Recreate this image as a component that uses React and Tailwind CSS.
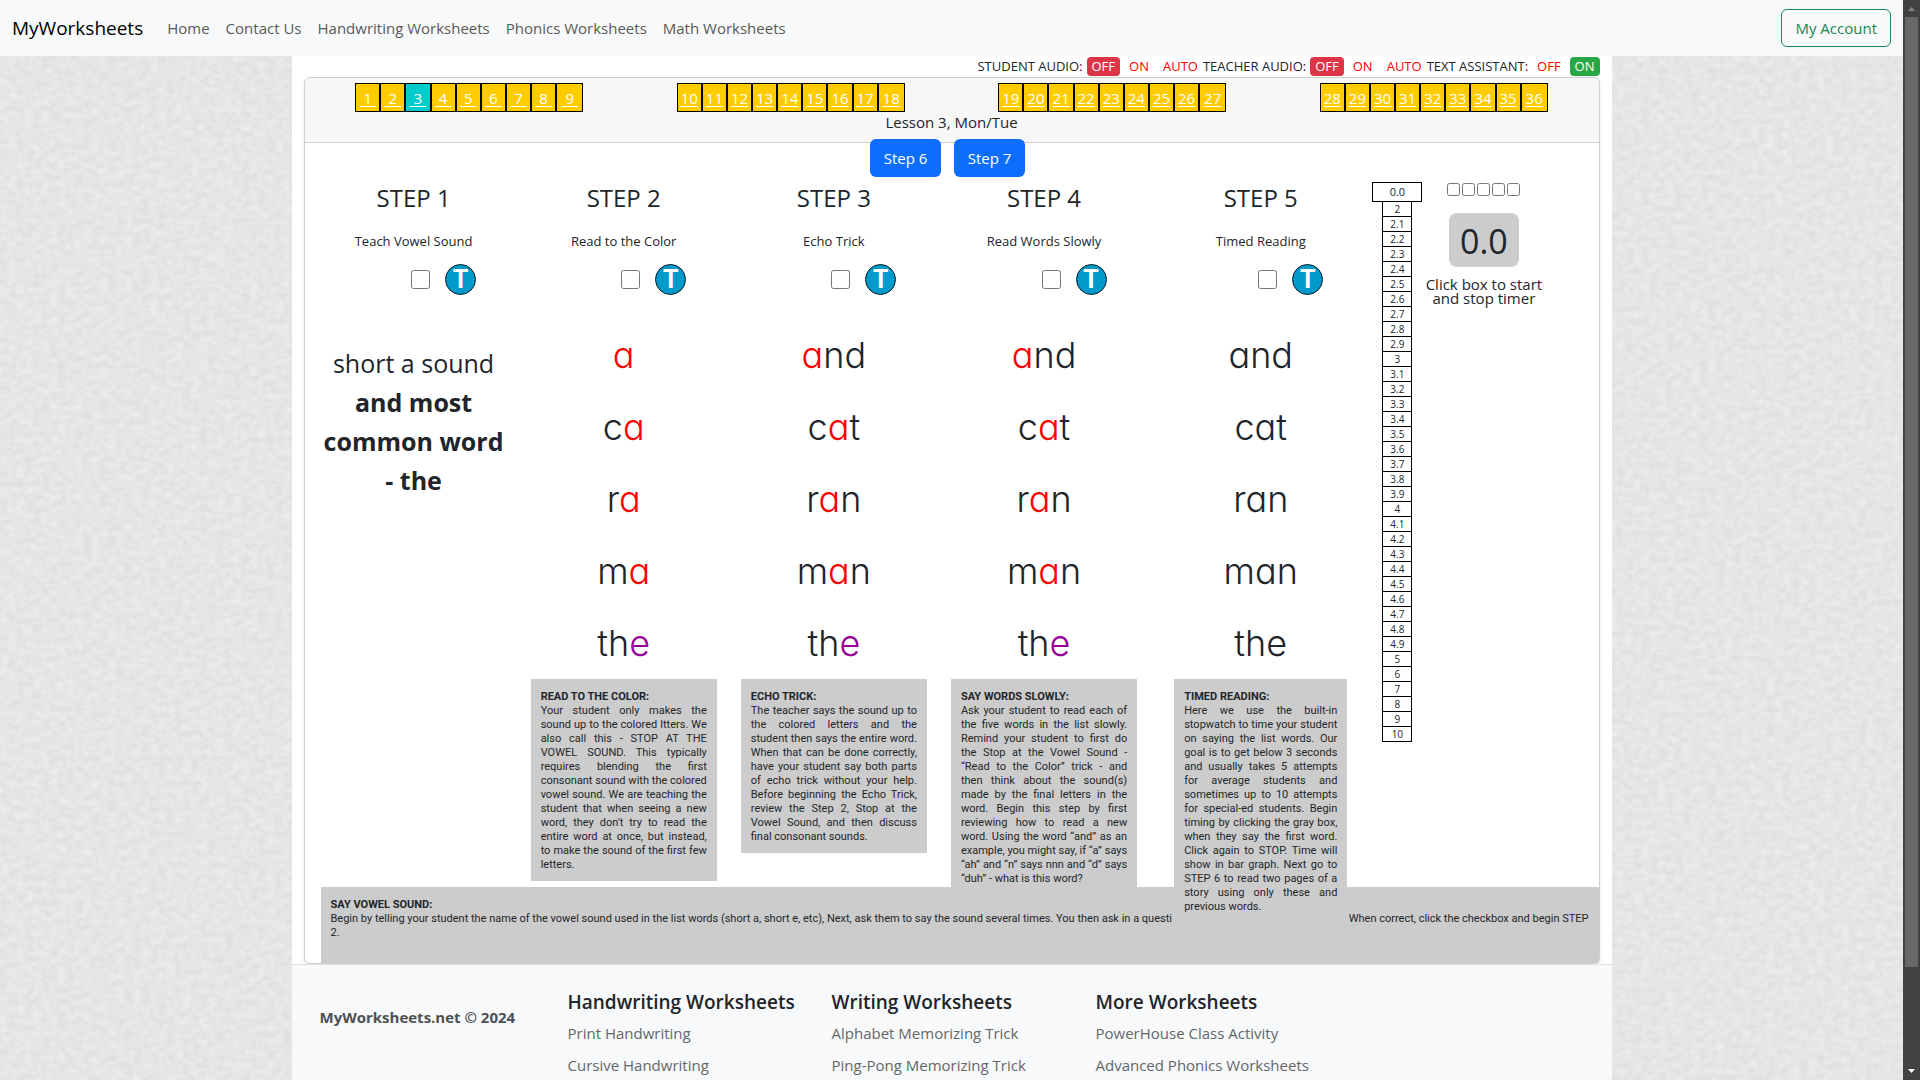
import React, { useState } from "react";
import { clsx } from "clsx";

const navLinks = [
    "Home",
    "Contact Us",
    "Handwriting Worksheets",
    "Phonics Worksheets",
    "Math Worksheets",
];

const lessonGroups = [0, 9, 18, 27].map((start) =>
    Array.from({ length: 9 }, (_, i) => start + i + 1)
);

const times = [
    ...Array.from({ length: 30 }, (_, i) => String((20 + i) / 10)),
    "5",
    "6",
    "7",
    "8",
    "9",
    "10",
];

// Each word is split into [before, coloured part, after]
const fullWords = [
    ["", "a", "nd"],
    ["c", "a", "t"],
    ["r", "a", "n"],
    ["m", "a", "n"],
    ["th", "e", ""],
];
const startWords = fullWords.map(([before, letter]) => [before, letter, ""]);

const steps = [
    {
        title: "STEP 2",
        subtitle: "Read to the Color",
        words: startWords,
        colored: true,
        noteTitle: "READ TO THE COLOR:",
        note: [
            "Your student only makes the",
            "sound up to the colored ltters. We",
            "also call this - STOP AT THE",
            "VOWEL SOUND. This typically",
            "requires blending the first",
            "consonant sound with the colored",
            "vowel sound. We are teaching the",
            "student that when seeing a new",
            "word, they don't try to read the",
            "entire word at once, but instead,",
            "to make the sound of the first few",
            "letters.",
        ],
    },
    {
        title: "STEP 3",
        subtitle: "Echo Trick",
        words: fullWords,
        colored: true,
        noteTitle: "ECHO TRICK:",
        note: [
            "The teacher says the sound up to",
            "the colored letters and the",
            "student then says the entire word.",
            "When that can be done correctly,",
            "have your student say both parts",
            "of echo trick without your help.",
            "Before beginning the Echo Trick,",
            "review the Step 2, Stop at the",
            "Vowel Sound, and then discuss",
            "final consonant sounds.",
        ],
    },
    {
        title: "STEP 4",
        subtitle: "Read Words Slowly",
        words: fullWords,
        colored: true,
        noteTitle: "SAY WORDS SLOWLY:",
        note: [
            "Ask your student to read each of",
            "the five words in the list slowly.",
            "Remind your student to first do",
            "the Stop at the Vowel Sound -",
            "“Read to the Color” trick - and",
            "then think about the sound(s)",
            "made by the final letters in the",
            "word. Begin this step by first",
            "reviewing how to read a new",
            "word. Using the word “and” as an",
            "example, you might say, if “a” says",
            "“ah” and “n” says nnn and “d” says",
            "“duh” - what is this word?",
        ],
    },
    {
        title: "STEP 5",
        subtitle: "Timed Reading",
        words: fullWords,
        colored: false,
        wide: true,
        noteTitle: "TIMED READING:",
        note: [
            "Here we use the built-in",
            "stopwatch to time your student",
            "on saying the list words. Our",
            "goal is to get below 3 seconds",
            "and usually takes 5 attempts",
            "for average students and",
            "sometimes up to 10 attempts",
            "for special-ed students. Begin",
            "timing by clicking the gray box,",
            "when they say the first word.",
            "Click again to STOP. Time will",
            "show in bar graph. Next go to",
            "STEP 6 to read two pages of a",
            "story using only these and",
            "previous words.",
        ],
    },
];

const footerColumns = [
    {
        title: "Handwriting Worksheets",
        links: ["Print Handwriting", "Cursive Handwriting"],
    },
    {
        title: "Writing Worksheets",
        links: ["Alphabet Memorizing Trick", "Ping-Pong Memorizing Trick"],
    },
    {
        title: "More Worksheets",
        links: ["PowerHouse Class Activity", "Advanced Phonics Worksheets"],
    },
];

function Navbar() {
    return (
        <nav className="relative flex h-14 items-center bg-[#f8f9fa] px-3">
            <a href="#" className="mr-6 text-[19px] text-black">
                MyWorksheets
            </a>
            <div className="flex gap-4 text-[15px] text-[#595959]">
                {navLinks.map((label) => (
                    <a key={label} href="#">
                        {label}
                    </a>
                ))}
            </div>
            <button className="ml-auto h-[38px] rounded-md border border-[#198754] px-[13px] text-[15px] text-[#198754]">
                My Account
            </button>
        </nav>
    );
}

function AudioOption({ label, active }) {
    return (
        <button
            className={clsx(
                "h-[19px] rounded px-[5px] leading-[19px]",
                active === "red" && "bg-[#dc3545] text-white",
                active === "green" && "bg-[#28a745] text-white",
                !active && "text-[#ff0000]"
            )}
        >
            {label}
        </button>
    );
}

function AudioBar() {
    return (
        <div className="flex h-[21px] items-center justify-end text-[13px]">
            <span className="mr-1">STUDENT AUDIO:</span>
            <div className="flex gap-1">
                <AudioOption label="OFF" active="red" />
                <AudioOption label="ON" />
                <AudioOption label="AUTO" />
            </div>
            <span className="mr-1">TEACHER AUDIO:</span>
            <div className="flex gap-1">
                <AudioOption label="OFF" active="red" />
                <AudioOption label="ON" />
                <AudioOption label="AUTO" />
            </div>
            <span className="mr-1">TEXT ASSISTANT:</span>
            <div className="flex gap-1">
                <AudioOption label="OFF" />
                <AudioOption label="ON" active="green" />
            </div>
        </div>
    );
}

function LessonPicker() {
    return (
        <div className="grid grid-cols-4 px-1 pt-[5px]">
            {lessonGroups.map((group) => (
                <div key={group[0]} className="flex justify-center">
                    <div className="grid w-[228px] grid-cols-9 border border-black">
                        {group.map((n) => (
                            <a
                                key={n}
                                href="#"
                                className={clsx(
                                    "h-[27px] border-black text-center text-[15px] leading-7 text-white underline underline-offset-2 not-last:border-r-2",
                                    n === 3 ? "bg-[#00cccc]" : "bg-[#ffcc00]"
                                )}
                            >
                                {n < 10 ? `\u00a0${n}\u00a0` : n}
                            </a>
                        ))}
                    </div>
                </div>
            ))}
        </div>
    );
}

function StepHeader({ title, subtitle }) {
    return (
        <div className="flex flex-col items-center pt-[3px]">
            <h2 className="text-[24px] leading-9">{title}</h2>
            <p className="mt-[15px] text-[13px] leading-[21px]">{subtitle}</p>
            <div className="mt-3 flex h-[31px] w-[125px] items-center justify-end gap-[15px]">
                <input
                    type="checkbox"
                    aria-label={`${title} done`}
                    className="size-[19px]"
                />
                <button
                    aria-label={`${title} teacher audio`}
                    className="flex size-[31px] items-center justify-center rounded-full border border-[#0b1a24] bg-[#0099cc] font-['Roboto',sans-serif] text-[25px] leading-none font-bold text-white"
                >
                    T
                </button>
            </div>
        </div>
    );
}

function Word({ parts, colored }) {
    const [before, letter, after] = parts;
    return (
        <li className="h-18 text-center font-['Inter',sans-serif] text-[36px] leading-18 font-light [font-feature-settings:'cv11']">
            {before}
            <span
                className={clsx(
                    colored && letter === "a" && "text-[#ff0000]",
                    colored && letter === "e" && "text-[#990099]"
                )}
            >
                {letter}
            </span>
            {after}
        </li>
    );
}

function Note({ title, lines }) {
    return (
        <div className="bg-[#cccccc] px-2.5 pt-[11px] pb-[9px] font-['Roboto',sans-serif] text-[11px] leading-[14px]">
            <h3 className="font-bold">{title}</h3>
            <p>
                {lines.map((line) => (
                    <span
                        key={line}
                        className="block whitespace-nowrap not-last:[text-align-last:justify]"
                    >
                        {line}{" "}
                    </span>
                ))}
            </p>
        </div>
    );
}

function StepColumn({ step }) {
    return (
        <section>
            <StepHeader title={step.title} subtitle={step.subtitle} />
            <ul className="mt-6">
                {step.words.map((parts) => (
                    <Word
                        key={parts.join("")}
                        parts={parts}
                        colored={step.colored}
                    />
                ))}
            </ul>
            {/* Long notes run over the bar below */}
            <div
                className={clsx(
                    "relative z-10 h-[208px]",
                    step.wide ? "px-[25px]" : "px-3"
                )}
            >
                <Note title={step.noteTitle} lines={step.note} />
            </div>
        </section>
    );
}

function TimeTable() {
    return (
        <div className="flex flex-col items-center pt-[5px]">
            <div className="h-5 w-full border border-black text-center text-[11px] leading-[18px]">
                0.0
            </div>
            <ol className="w-[30px] border-x border-black text-center text-[10px]">
                {times.map((t) => (
                    <li
                        key={t}
                        className="h-[15px] border-b border-black leading-[15px]"
                    >
                        {t}
                    </li>
                ))}
            </ol>
        </div>
    );
}

function Stopwatch() {
    const [running, setRunning] = useState(false);
    return (
        <div className="flex flex-col items-center pt-1.5">
            <div className="flex gap-0.5">
                {[1, 2, 3, 4, 5].map((n) => (
                    <input
                        key={n}
                        type="checkbox"
                        aria-label={`Attempt ${n}`}
                        className="size-[13px]"
                    />
                ))}
            </div>
            <button
                aria-pressed={running}
                onClick={() => setRunning(!running)}
                className="mt-[17px] h-[54px] w-[70px] rounded-lg bg-[#cccccc] text-[34px] leading-[56px]"
            >
                0.0
            </button>
            <p className="mt-2.5 text-center text-[15px] leading-[14px] whitespace-nowrap">
                Click box to start
                <br />
                and stop timer
            </p>
        </div>
    );
}

function Footer() {
    return (
        <footer className="grid grid-cols-5 border-t border-[#dee2e6] bg-[#f8f9fa] pt-[25px] pb-12">
            <p className="pt-4 pl-7 text-[15px] font-bold whitespace-nowrap text-[#4d5154]">
                MyWorksheets.net © 2024
            </p>
            {footerColumns.map((col) => (
                <div key={col.title} className="pl-3">
                    <h5 className="mb-[7px] text-[19px] leading-6 font-semibold whitespace-nowrap">
                        {col.title}
                    </h5>
                    <ul className="space-y-2 text-[15px] leading-6 text-[#63676a]">
                        {col.links.map((label) => (
                            <li key={label}>
                                <a href="#">{label}</a>
                            </li>
                        ))}
                    </ul>
                </div>
            ))}
        </footer>
    );
}

function Texture() {
    return (
        <svg className="absolute inset-0 h-full w-full" aria-hidden="true">
            <filter
                id="paper"
                x="0"
                y="0"
                width="100%"
                height="100%"
                colorInterpolationFilters="sRGB"
            >
                <feTurbulence
                    type="fractalNoise"
                    baseFrequency="0.12 0.16"
                    numOctaves="3"
                    seed="4"
                />
                <feColorMatrix values="0.08 0 0 0 0.86  0.08 0 0 0 0.86  0.08 0 0 0 0.86  0 0 0 0 1" />
            </filter>
            <rect width="100%" height="100%" fill="#e5e5e5" filter="url(#paper)" />
        </svg>
    );
}

function ScrollTrack() {
    return (
        <div className="flex w-[17px] flex-col items-center bg-[#424242]">
            <svg width="17" height="17" viewBox="0 0 17 17">
                <path d="M8.500 7 L12 11 H5 Z" fill="#868686" />
            </svg>
            <div className="w-[13px] grow bg-[#686868]" />
            <div className="h-[96px]" />
            <svg width="17" height="17" viewBox="0 0 17 17">
                <path d="M5 6 H12 L8.500 10 Z" fill="#ffffff" />
            </svg>
        </div>
    );
}

export default function App() {
    return (
        <div className="flex h-screen overflow-hidden font-['Open_Sans','Noto_Sans',sans-serif] text-[#212529]">
            <div className="relative min-w-0 grow overflow-hidden bg-[#e5e5e5]">
                <Texture />
                <Navbar />
                <main className="relative mx-auto max-w-[1320px] bg-white">
                    <div className="px-3">
                        <AudioBar />
                        <div className="rounded-md border border-[#cfcfcf] shadow-[0_2px_4px_rgba(0,0,0,0.1)]">
                            <header className="h-[65px] rounded-t-md border-b border-[#cfcfcf] bg-[#f7f7f7]">
                                <LessonPicker />
                                <p className="text-center text-[15px] leading-5">
                                    Lesson 3, Mon/Tue
                                </p>
                            </header>
                            <div className="-mt-1 flex justify-center gap-[13px] pr-2">
                                {["Step 6", "Step 7"].map((label) => (
                                    <button
                                        key={label}
                                        className="h-[38px] w-[71px] rounded-md bg-[#0d6efd] text-[15px] text-white"
                                    >
                                        {label}
                                    </button>
                                ))}
                            </div>
                            <div className="grid grid-cols-[210fr_210fr_210fr_210fr_223fr_50fr_123fr_53fr] pl-1">
                                <section>
                                    <StepHeader
                                        title="STEP 1"
                                        subtitle="Teach Vowel Sound"
                                    />
                                    <p className="mt-[49px] px-3 text-center text-[25px] leading-[39px]">
                                        short a sound
                                        <br />
                                        <b>and most common word - the</b>
                                    </p>
                                </section>
                                {steps.map((step) => (
                                    <StepColumn key={step.title} step={step} />
                                ))}
                                <TimeTable />
                                <Stopwatch />
                            </div>
                            <div className="ml-4 h-[76px] bg-[#cccccc] px-2.5 pt-[11px] pb-[9px] font-['Roboto',sans-serif] text-[11px] leading-[14px]">
                                <h3 className="font-bold">SAY VOWEL SOUND:</h3>
                                <p className="flex flex-wrap justify-between">
                                    <span>
                                        Begin by telling your student the name
                                        of the vowel sound used in the list
                                        words (short a, short e, etc), Next, ask
                                        them to say the sound several times. You
                                        then ask in a questi
                                    </span>
                                    <span>
                                        When correct, click the checkbox and
                                        begin STEP
                                    </span>
                                    <span className="w-full">2.</span>
                                </p>
                            </div>
                        </div>
                    </div>
                    <Footer />
                </main>
            </div>
            <ScrollTrack />
        </div>
    );
}
